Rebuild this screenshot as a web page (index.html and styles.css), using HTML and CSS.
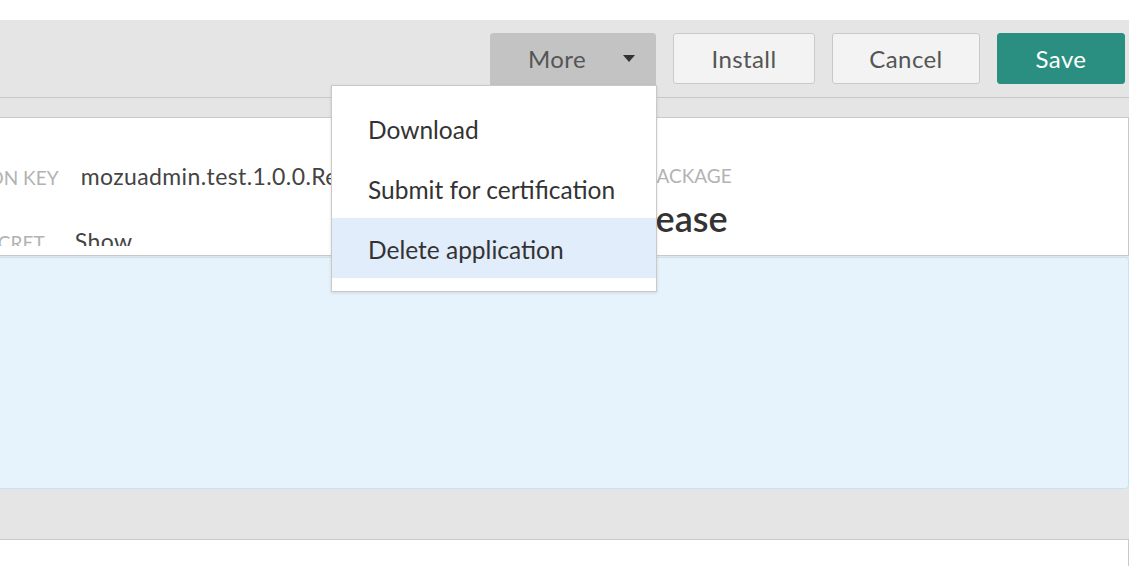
FILE: index.html
```html
<!DOCTYPE html>
<html lang="en">
<head>
  <meta charset="UTF-8" />
  <meta name="viewport" content="width=device-width, initial-scale=1.0"/>
  <title>Application Details</title>
  <link rel="stylesheet" href="styles.css">
</head>
<body>
  <div class="page">
    <div class="toolbar">
      <div class="more">
        <button class="btn btn-more">More <span class="caret"></span></button>
        <ul class="menu">
          <li>Download</li>
          <li>Submit for certification</li>
          <li class="active">Delete application</li>
        </ul>
      </div>
      <button class="btn btn-install">Install</button>
      <button class="btn btn-cancel">Cancel</button>
      <button class="btn btn-save">Save</button>
    </div>

    <div class="main">
      <div class="card summary">
        <div class="keys">
          <div class="row">
            <span class="label">Application key</span>
            <span class="value key-value">mozuadmin.test.1.0.0.Release</span>
          </div>
          <div class="row">
            <span class="label">Shared secret</span>
            <span class="value secret-value">Show</span>
          </div>
        </div>
        <div class="package">
          <div class="label">App package</div>
          <div class="package-name">Release</div>
        </div>
      </div>

      <div class="notice"></div>

      <div class="card next"></div>
    </div>
  </div>
</body>
</html>
```

FILE: styles.css
```css
body {
  margin: 0;
  background-color: #ffffff;
  font-family: Lato, 'Open Sans', sans-serif;
  color: #333;
  overflow: hidden;
}

.page {
  padding-top: 20px;
  margin-right: 5px;
}

/* top action bar */
.toolbar {
  height: 77px;
  background-color: #e5e5e5;
  border-bottom: 1px solid #c9c9c9;
  display: flex;
  justify-content: flex-end;
  align-items: center;
  gap: 17px;
  padding-right: 4px;
  position: relative;
  z-index: 2;
}

.btn {
  height: 51px;
  padding: 0;
  border: 1px solid #c9c9c9;
  border-radius: 3px;
  background-color: #f3f3f3;
  font-family: inherit;
  font-size: 24px;
  letter-spacing: 0.4px;
  color: #555;
  cursor: pointer;
}

.btn-install {
  width: 142px;
}

.btn-cancel {
  width: 148px;
}

.btn-save {
  width: 128px;
  background-color: #2a8f80;
  border-color: #2a8f80;
  color: #ffffff;
}

.more {
  position: relative;
}

.btn-more {
  width: 166px;
  height: 52px;
  display: flex;
  align-items: center;
  padding-left: 37px;
  background-color: #c3c3c3;
  border-color: #c3c3c3;
  border-radius: 3px 3px 0 0;
}

.caret {
  margin-left: auto;
  margin-right: 20px;
  width: 0;
  height: 0;
  border-left: 6px solid transparent;
  border-right: 6px solid transparent;
  border-top: 7px solid #333;
}

/* dropdown */
.menu {
  position: absolute;
  top: 100%;
  right: -1px;
  width: 326px;
  box-sizing: border-box;
  margin: 0;
  padding: 12px 0 13px;
  list-style: none;
  background-color: #ffffff;
  border: 1px solid #c9c9c9;
  box-shadow: 0 1px 3px rgba(0, 0, 0, 0.12);
}

.menu li {
  height: 60px;
  line-height: 64px;
  padding-left: 36px;
  font-size: 24.5px;
  color: #333;
  white-space: nowrap;
}

.menu li.active {
  background-color: #e1edfb;
}

/* content area */
.main {
  margin-left: -200px;
  background-color: #e5e5e5;
  padding-top: 19px;
  padding-bottom: 50px;
}

.card {
  background-color: #ffffff;
  border: 1px solid #c9c9c9;
  box-sizing: border-box;
}

.summary {
  height: 139px;
  overflow: hidden;
  display: flex;
  padding: 27px 0 0 96px;
}

.keys {
  width: 709px;
  height: 101px;
  overflow: hidden;
}

.row {
  height: 62px;
  line-height: 62px;
  white-space: nowrap;
}

.row + .row {
  padding-top: 3px;
}

.label {
  font-size: 19px;
  color: #b3b3b3;
  text-transform: uppercase;
}

.value {
  font-size: 23px;
  letter-spacing: 0.4px;
  color: #444;
}

.key-value {
  margin-left: 18px;
}

.secret-value {
  margin-left: 26px;
}

.package {
  padding-top: 19px;
}

.package .label {
  line-height: 24px;
}

.package-name {
  margin-top: 8px;
  font-size: 36px;
  font-weight: 600;
  line-height: 44px;
  color: #333;
}

.notice {
  height: 232px;
  margin-top: 1px;
  margin-bottom: 50px;
  background-color: #e7f3fc;
  border: 1px solid #c4e5ee;
  border-radius: 4px;
  box-sizing: border-box;
}

.next {
  height: 60px;
  border-bottom: none;
}
```
